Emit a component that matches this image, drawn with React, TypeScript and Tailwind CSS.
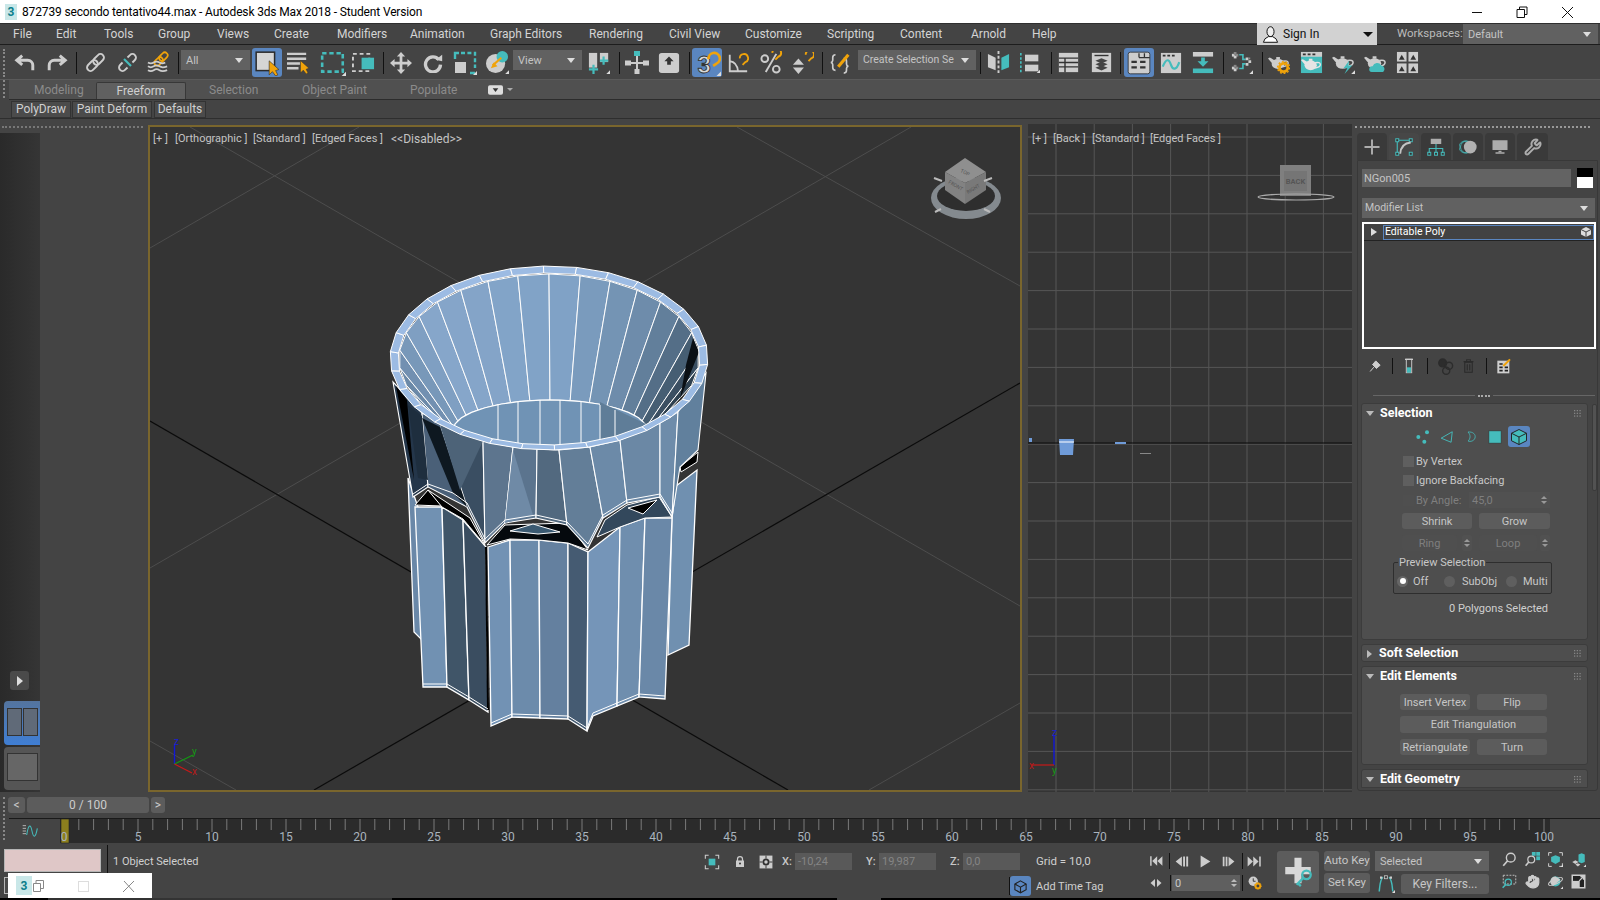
import type { ReactNode } from 'react';
import { Wrench, Hand } from 'lucide-react';

const G = '#cdcdcd';
const T = '#45bcbc';
const O = '#f0a30a';

const ic = (c: ReactNode) => ({ className = '' }: { className?: string }) => (
  <svg viewBox="0 0 24 24" className={`shrink-0 ${className}`}>{c}</svg>
);
const Tri = () => <polygon points="20,24 24,24 24,20" fill="#ddd" />;
const Hook = ({ x = 0, y = 0 }: { x?: number; y?: number }) => (
  <path transform={`translate(${x} ${y})`} d="M14 7 a4.5 4.5 0 1 1 6 4 l-3 3" fill="none" stroke={O} strokeWidth="2" />
);
const Cursor = () => <polygon points="14,10 14,23 17,20 20,24 22,23 20,19 23,18" fill={O} stroke="#333" strokeWidth=".6" />;
const Pot = ({ fill = G }: { fill?: string }) => (
  <g fill={fill}>
    <ellipse cx="11" cy="13" rx="7" ry="5.5" />
    <polygon points="5,13 0,7 2,6 7,9" />
    <path d="M16 10 q6 -1 6 2 q0 3 -6 4" fill="none" stroke={fill} strokeWidth="1.6" />
    <rect x="9" y="5.5" width="4" height="2.5" />
  </g>
);

const Undo = ic(<path d="M9 4 L3 9 L9 14 M3 9 H15 a5.5 5.5 0 0 1 5.5 5.5 V20" fill="none" stroke={G} strokeWidth="3.2" />);
const Redo = ic(<path d="M15 4 L21 9 L15 14 M21 9 H9 a5.5 5.5 0 0 0 -5.5 5.5 V20" fill="none" stroke={G} strokeWidth="3.2" />);
const Link = ic(
  <g transform="rotate(-45 12 12)" fill="none" stroke={G} strokeWidth="2.2">
    <rect x="0" y="8" width="14" height="8" rx="4" />
    <rect x="10" y="8" width="14" height="8" rx="4" />
  </g>
);
const Unlink = ic(
  <g>
    <g transform="rotate(-45 12 12)" fill="none" stroke={G} strokeWidth="2.2">
      <path d="M8 8 H4 a4 4 0 0 0 0 8 H8 M16 8 H20 a4 4 0 0 1 0 8 H16" />
    </g>
    <path d="M8 8 L16 16" stroke={T} strokeWidth="2.5" />
  </g>
);
const Bind = ic(
  <g fill="none">
    <g transform="rotate(-45 15 8)" stroke={O} strokeWidth="1.8">
      <rect x="6" y="5" width="10" height="6" rx="3" />
      <rect x="13" y="5" width="10" height="6" rx="3" />
    </g>
    <path d="M1 12 q3 2 6 0 t6 0 t6 0 M1 16 q3 2 6 0 t6 0 t8 0 M1 20 q3 2 6 0 t6 0 t8 0" stroke={G} strokeWidth="1.8" />
  </g>
);
const SelectIco = ic(
  <g>
    <rect x="2" y="2" width="17" height="17" fill="#d5d5d5" stroke="#2b2b2b" strokeWidth="1.4" />
    <Cursor />
  </g>
);
const SelectName = ic(
  <g>
    <path d="M0 3 H20 M0 8 H20 M0 13 H14 M0 18 H12" stroke={G} strokeWidth="2.6" />
    <Cursor />
  </g>
);
const Region = ic(
  <g>
    <rect x="2" y="3" width="19" height="17" fill="none" stroke={T} strokeWidth="2.4" strokeDasharray="4 2.6" />
    <Tri />
  </g>
);
const WindowIco = ic(
  <g>
    <rect x="1" y="3" width="17" height="18" fill="none" stroke={G} strokeWidth="2" strokeDasharray="4 3" />
    <rect x="10" y="7" width="13" height="12" fill={T} />
  </g>
);
const Move = ic(
  <path fill={G} d="M12 0 L16.5 5 H13.5 V10.5 H19 V7.5 L24 12 L19 16.5 V13.5 H13.5 V19 H16.5 L12 24 L7.5 19 H10.5 V13.5 H5 V16.5 L0 12 L5 7.5 V10.5 H10.5 V5 H7.5 Z" />
);
const Rotate = ic(
  <g>
    <path d="M19 8 A9 9 0 1 0 21 14" fill="none" stroke={G} strokeWidth="4" />
    <polygon points="15,8 23,10 23,2" fill={G} />
  </g>
);
const Scale = ic(
  <g>
    <path d="M8 2 H22 V17" fill="none" stroke={T} strokeWidth="2.4" strokeDasharray="4 2.4" />
    <path d="M2 8 V2 H6 M22 22 H17" fill="none" stroke={T} strokeWidth="2.4" />
    <rect x="2" y="11" width="11" height="11" fill={G} />
    <Tri />
  </g>
);
const Place = ic(
  <g>
    <circle cx="10" cy="13" r="10" fill={G} />
    <circle cx="17" cy="6" r="6" fill={T} />
    <path d="M7 15 L16 7" stroke={O} strokeWidth="2.2" />
    <polygon points="5,18 12,16 8,12" fill={O} />
    <Tri />
  </g>
);
const Pivot = ic(
  <g>
    <rect x="1" y="1" width="9" height="16" fill={G} />
    <rect x="13" y="1" width="9" height="10" fill={G} />
    <path d="M6 14 V24 M1 19 H11 M17 5 V14 M13 9.5 H22" stroke={T} strokeWidth="2.4" />
    <Tri />
  </g>
);
const Manip = ic(
  <g>
    <path d="M12 5 V22 M2 12 H22" stroke={G} strokeWidth="2" />
    <rect x="9" y="0" width="6" height="5" fill={T} />
    <rect x="0" y="9.5" width="6" height="5" fill={G} />
    <rect x="18" y="9.5" width="6" height="5" fill={G} />
    <rect x="9.5" y="18" width="5" height="5" fill={G} />
  </g>
);
const KeyIco = ic(
  <g>
    <rect x="1" y="1" width="22" height="22" rx="3" fill={G} />
    <polygon points="12,5 17,10 14,10 14,14 10,14 10,10 7,10" fill="#333" />
  </g>
);
const Snap3 = ic(
  <g>
    <text x="3" y="21" fontSize="21" fontWeight="700" fill="#d8d8d8" stroke="#333" strokeWidth=".8">3</text>
    <path d="M13 9 a5 5 0 1 1 7 4 l-3 2" fill="none" stroke={O} strokeWidth="2.4" />
    <Tri />
  </g>
);
const Angle = ic(
  <g>
    <path d="M3 3 V21 H22 M3 10 Q11 11 12 21" fill="none" stroke={G} strokeWidth="2" />
    <Hook />
  </g>
);
const Percent = ic(
  <g>
    <circle cx="5" cy="8" r="3.5" fill="none" stroke={G} strokeWidth="2" />
    <circle cx="17" cy="19" r="3.5" fill="none" stroke={G} strokeWidth="2" />
    <path d="M17 3 L6 22" stroke={G} strokeWidth="2" />
    <Hook x={-1} y={-5} />
  </g>
);
const SpinSnap = ic(
  <g>
    <polygon points="7,7 13,14 1,14" fill={G} />
    <polygon points="7,24 13,17 1,17" fill={G} />
    <Hook x={1} y={-4} />
  </g>
);
const Named = ic(
  <g>
    <path d="M6 3 Q3 3 3 6 V9 Q3 11 1 11.5 Q3 12 3 14 V17 Q3 20 6 20" fill="none" stroke={G} strokeWidth="1.8" />
    <path d="M15 7 Q18 7 18 10 V13 Q18 15 20 15.5 Q18 16 18 18 V20 Q18 23 15 23" fill="none" stroke={G} strokeWidth="1.8" />
    <path d="M9 16 L20 3" stroke={O} strokeWidth="3.4" />
  </g>
);
const Mirror = ic(
  <g>
    <polygon points="1,3 9,7 9,20 1,17" fill={G} />
    <polygon points="23,3 15,7 15,20 23,17" fill={T} />
    <path d="M12 0 V24" stroke={G} strokeWidth="2" strokeDasharray="3 2" />
  </g>
);
const Align = ic(
  <g>
    <path d="M1 0 V24" stroke={T} strokeWidth="2" strokeDasharray="3 2" />
    <rect x="6" y="2" width="16" height="8" fill={G} />
    <rect x="6" y="14" width="16" height="8" fill={G} />
    <Tri />
  </g>
);
const TableIco = ic(
  <g>
    <rect x="1" y="1" width="22" height="22" fill={G} />
    <path d="M1 7 H23 M1 12 H23 M1 17 H23 M8 7 V23" stroke="#333" strokeWidth="1.6" />
  </g>
);
const Layers = ic(
  <g>
    <rect x="1" y="1" width="22" height="22" fill={G} />
    <path d="M4 4 H20" stroke="#333" strokeWidth="1.6" />
    <polygon points="12,7 19,10 12,13 5,10" fill="#444" />
    <polygon points="12,11 19,14 12,17 5,14" fill="#444" />
    <polygon points="12,15 19,18 12,21 5,18" fill="#444" />
  </g>
);
const Ribbon = ic(
  <g>
    <rect x="2" y="2" width="20" height="20" rx="2" fill={G} stroke="#333" strokeWidth=".8" />
    <path d="M12 3 V7 M17 3 V7 M12 7 H22" stroke="#333" strokeWidth="1.2" />
    <path d="M5 11 H10 M13 11 H18 M5 16 H10 M13 16 H18" stroke="#333" strokeWidth="2" />
  </g>
);
const Curve = ic(
  <g>
    <rect x="1" y="1" width="22" height="22" fill={G} />
    <path d="M3 4 H6 M8 4 H11 M13 4 H16" stroke="#333" strokeWidth="2" />
    <path d="M3 16 C7 6 10 8 12 14 S18 20 21 11" fill="none" stroke={T} strokeWidth="2.4" />
  </g>
);
const Dope = ic(
  <g>
    <rect x="1" y="0" width="22" height="5" fill={G} />
    <rect x="1" y="18" width="22" height="5" fill={T} />
    <polygon points="12,16 6,10 10,10 10,6 14,6 14,10 18,10" fill={T} />
  </g>
);
const Schematic = ic(
  <g>
    <rect x="1" y="2" width="3" height="3" fill={G} /><rect x="5" y="2" width="3" height="3" fill="#888" />
    <rect x="3" y="0" width="3" height="3" fill="#888" /><rect x="3" y="4" width="3" height="3" fill={G} />
    <rect x="1" y="16" width="3" height="3" fill={G} /><rect x="5" y="16" width="3" height="3" fill="#888" />
    <rect x="3" y="14" width="3" height="3" fill="#888" /><rect x="3" y="18" width="3" height="3" fill={G} />
    <path d="M9 3 H13 V8 H16 M9 18 H13 V13 H16" fill="none" stroke={T} strokeWidth="1.8" />
    <g fill={G}><rect x="16" y="6" width="3" height="3" /><rect x="19" y="9" width="3" height="3" /><rect x="16" y="12" width="3" height="3" /><rect x="19" y="6" width="2" height="2" fill="#888" /></g>
    <Tri />
  </g>
);
const PotGear = ic(
  <g>
    <Pot />
    <circle cx="17" cy="17" r="4.5" fill="none" stroke={O} strokeWidth="3" />
    <circle cx="17" cy="17" r="6.5" fill="none" stroke={O} strokeWidth="1.6" strokeDasharray="2 2" />
  </g>
);
const PotFrame = ic(
  <g>
    <rect x="1" y="1" width="22" height="22" fill={T} />
    <rect x="1" y="1" width="22" height="5" fill={G} />
    <path d="M3 3.5 H6 M8 3.5 H11 M13 3.5 H16" stroke="#333" strokeWidth="2" />
    <g transform="translate(1 3) scale(.92)"><Pot fill="#e5e5e5" /></g>
  </g>
);
const PotBolt = ic(
  <g>
    <Pot />
    <polygon points="18,10 12,18 16,18 13,24 21,15 17,15" fill={T} />
    <Tri />
  </g>
);
const PotCloud = ic(
  <g>
    <Pot />
    <path d="M8 22 a3 3 0 0 1 1 -6 a5 5 0 0 1 9 -1 a4 4 0 0 1 2 7 Z" fill={T} />
  </g>
);
const GridIco = ic(
  <g fill={G}>
    <rect x="1" y="1" width="10" height="10" /><rect x="13" y="1" width="10" height="10" />
    <rect x="1" y="13" width="10" height="10" /><rect x="13" y="13" width="10" height="10" />
    <g fill="#333">
      <polygon points="3,9 6,4 9,9" /><polygon points="15,9 18,4 21,9" />
      <polygon points="3,21 6,16 9,21" /><polygon points="15,21 18,16 21,21" />
    </g>
  </g>
);

const ToolSep = ({ className }: { className: string }) => <div className={`w-px h-[22px] bg-[#111] shrink-0 ${className}`} />;
const Drop = ({ className, label }: { className: string; label: string }) => (
  <div className={`h-[20px] bg-[#616161] text-[#c4c4c4] flex items-center justify-between pl-[5px] pr-[7px] shrink-0 ${className}`}>
    <span className="whitespace-nowrap">{label}</span>
    <span className="w-0 h-0 border-x-[4px] border-x-transparent border-t-[5px] border-t-[#ddd]" />
  </div>
);
const Btn = ({ className, children, dim }: { className: string; children: ReactNode; dim?: boolean }) => (
  <div className={`flex items-center justify-center rounded-[3px] shrink-0 whitespace-nowrap ${dim ? 'bg-[#4f4f4f] text-[#7f7f7f]' : 'bg-[#5c5c5c] text-[#c6c6c6]'} ${className}`}>{children}</div>
);
const Check = ({ dim }: { dim?: boolean }) => <div className={`w-[11px] h-[11px] shrink-0 ${dim ? 'bg-[#4f4f4f]' : 'bg-[#5f5f5f]'}`} />;
const Spin = ({ className }: { className: string }) => (
  <div className={`flex flex-col items-center justify-center gap-[2px] h-[16px] w-[10px] bg-[#515151] rounded-[2px] shrink-0 ${className}`}>
    <span className="w-0 h-0 border-x-[3px] border-x-transparent border-b-[3px] border-b-[#999]" />
    <span className="w-0 h-0 border-x-[3px] border-x-transparent border-t-[3px] border-t-[#999]" />
  </div>
);
const Grip = () => (
  <svg viewBox="0 0 9 9" className="w-[7px] h-[7px] ml-auto mr-[6px]" fill="#888">
    {[0, 3.5, 7].map(x => [0, 3.5, 7].map(y => <rect key={`${x}${y}`} x={x} y={y} width="1.6" height="1.6" />))}
  </svg>
);
const RollHead = ({ title, open = true }: { title: string; open?: boolean }) => (
  <div className="flex items-center h-[18px] shrink-0">
    {open
      ? <span className="ml-[4px] w-0 h-0 border-x-[4px] border-x-transparent border-t-[5px] border-t-[#bbb]" />
      : <span className="ml-[5px] w-0 h-0 border-y-[4px] border-y-transparent border-l-[5px] border-l-[#bbb]" />}
    <span className={`font-bold text-white text-[12.5px] ${open ? 'ml-[6px]' : 'ml-[7px]'}`}>{title}</span>
    <Grip />
  </div>
);

// glass model, coordinates are page pixels
const ell = (cx: number, cy: number, rx: number, ry: number, deg: number): [number, number] => [
  cx + rx * Math.cos((deg * Math.PI) / 180),
  cy + ry * Math.sin((deg * Math.PI) / 180),
];
const pts = (a: [number, number][]) => a.map(p => p.join(',')).join(' ');
const mix = (deg: number) => {
  const stops: [number, number[]][] = [
    [150, [100, 130, 160]], [210, [134, 166, 202]], [270, [128, 162, 198]],
    [310, [108, 138, 168]], [340, [72, 96, 118]], [380, [34, 48, 60]],
  ];
  for (let i = 0; i < stops.length - 1; i++) {
    if (deg <= stops[i + 1][0]) {
      const t = (deg - stops[i][0]) / (stops[i + 1][0] - stops[i][0]);
      const c = stops[i][1].map((v, k) => Math.round(v + (stops[i + 1][1][k] - v) * t));
      return `rgb(${c.join(',')})`;
    }
  }
  return '#222';
};
const wallAngles = Array.from({ length: 19 }, (_, i) => 150 + i * 12);
const rimAngles = Array.from({ length: 30 }, (_, i) => i * 12 + 4);

type Face = { p: string; f: string };
const lowerFaces: Face[] = [
  { p: '408,478 418,507 422,640 414,632', f: '#6a88a8' },
  { p: '672,518 676,486 697,470 689,645 668,655', f: '#7090b0' },
  { p: '415,507 442,507 447,687 423,687', f: '#7191b2' },
  { p: '442,507 463,520 469,700 447,687', f: '#405568' },
  { p: '463,520 486,547 488,712 469,700', f: '#3a4d60' },
  { p: '488,547 510,540 512,717 491,726', f: '#7292b4' },
  { p: '510,540 539,540 540,718 512,717', f: '#6c8bab' },
  { p: '539,540 568,543 568,719 540,718', f: '#64809f' },
  { p: '568,543 588,552 587,731 568,719', f: '#455b72' },
  { p: '588,552 620,527 617,706 593,716 587,731', f: '#7595b8' },
  { p: '620,527 645,518 639,697 617,706', f: '#6f8eae' },
  { p: '645,518 672,518 665,699 639,697', f: '#6a88a8' },
];
const undersides: Face[] = [
  { p: '415,505 428,490 442,506', f: '#000' },
  { p: '428,490 470,518 485,545 463,519 442,507', f: '#000' },
  { p: '487,545 505,525 568,523 588,550 568,543 539,540 510,539', f: '#05090d' },
  { p: '510,531 533,524 560,532 538,534', f: '#3b5a72' },
  { p: '597,537 605,520 627,505 659,497 672,517 645,518 620,527', f: '#33485c' },
  { p: '628,508 657,500 643,514', f: '#000' },
  { p: '680,467 698,452 697,462 681,472', f: '#000' },
];
const upperFaces: Face[] = [
  { p: '393,382 422,413 428,487 413,497', f: '#24364a' },
  { p: '422,413 440,423 467,507 428,487', f: '#4a6078' },
  { p: '440,423 483,441 485,543 467,507', f: '#3a4e62' },
  { p: '483,441 513,447 505,523 485,543', f: '#5d758e' },
  { p: '513,447 537,449 536,518 505,523', f: '#5b748e' },
  { p: '537,449 559,450 567,525 536,518', f: '#52697f' },
  { p: '559,450 590,447 603,518 588,548 567,525', f: '#637e98' },
  { p: '590,447 620,440 627,503 603,518', f: '#6c8aa8' },
  { p: '620,440 660,423 660,497 627,503', f: '#6b88a5' },
  { p: '660,423 678,412 672,517 660,497', f: '#6e8caa' },
  { p: '678,412 706,373 698,450 680,467 672,517', f: '#61809d' },
];
const slivers: Face[] = [
  { p: '396,386 407,400 414,480', f: '#000' },
  { p: '422,418 440,427 467,507 453,493', f: '#0e1820' },
  { p: '408,405 422,416 428,480 418,478', f: '#1e2e3e' },
  { p: '513,450 533,515 505,523', f: '#6f8aa6' },
  { p: '440,425 483,441 460,490', f: '#4d6378' },
];

const Glass = () => (
  <g>
    {wallAngles.map(a => (
      <polygon
        key={a}
        points={pts([ell(549, 359, 150, 85, a), ell(549, 359, 150, 85, a + 12), ell(550, 430, 97, 30, a + 12), ell(550, 430, 97, 30, a)])}
        fill={mix(a)}
        stroke="#fff"
        strokeWidth="1"
      />
    ))}
    <polygon points="693,338 699,352 680,399 686,365" fill="#0a0f14" />
    <polygon points={pts(Array.from({ length: 30 }, (_, i) => ell(550, 430, 97, 30, i * 12)))} fill="#7093b5" stroke="#fff" strokeWidth="1.2" />
    <polygon points="600,402 646,424 640,455 600,455" fill="#5f7d98" />
    <path d="M498 404 V450 M518 401 V450 M540 400 V450 M560 400 V450 M581 402 V450 M600 405 V450 M615 410 V450" stroke="#fff" strokeWidth="1" />
    {lowerFaces.map(f => <polygon key={f.p} points={f.p} fill={f.f} stroke="#fff" strokeWidth="1.3" />)}
    <path d="M486 547 L488 710" stroke="#000" strokeWidth="2" />
    <polyline points="423,684 447,684 469,697 488,709" fill="none" stroke="#fff" strokeWidth="1" />
    <polyline points="491,723 512,714 540,715 568,716 587,728 593,713 617,703 639,694 665,696" fill="none" stroke="#fff" strokeWidth="1" />
    {undersides.map(f => <polygon key={f.p} points={f.p} fill={f.f} stroke="#fff" strokeWidth="1" />)}
    {upperFaces.map(f => <polygon key={f.p} points={f.p} fill={f.f} stroke="#fff" strokeWidth="1.1" />)}
    {slivers.map(f => <polygon key={f.p} points={f.p} fill={f.f} />)}
    <polyline points="413,494 428,484 453,493 467,503 485,539 505,520 536,515 567,522 588,544 603,515 627,500 660,494 672,513" fill="none" stroke="#fff" strokeWidth="1" />
    {rimAngles.map(a => (
      <polygon
        key={a}
        points={pts([ell(549, 358, 159, 92, a), ell(549, 358, 159, 92, a + 12), ell(549, 359, 151, 86, a + 12), ell(549, 359, 151, 86, a)])}
        fill="#9cbbe3"
        stroke="#fff"
        strokeWidth="1"
      />
    ))}
  </g>
);

const OrthoScene = () => (
  <svg viewBox="150 127 870 663" className="w-[870px] h-[663px]">
    <g stroke="#4d4d4d" strokeWidth="1">
      <line x1="190" y1="127" x2="1020" y2="606" />
      <line x1="737" y1="127" x2="1020" y2="286" />
      <line x1="150" y1="741" x2="236" y2="790" />
      <line x1="359" y1="127" x2="150" y2="248" />
      <line x1="911" y1="127" x2="150" y2="568" />
      <line x1="1020" y1="703" x2="869" y2="790" />
    </g>
    <line x1="150" y1="421" x2="788" y2="790" stroke="#0b0b0b" strokeWidth="1.2" />
    <line x1="1020" y1="383" x2="314" y2="790" stroke="#0b0b0b" strokeWidth="1.2" />
    <Glass />
    <line x1="174.5" y1="764" x2="174.5" y2="745" stroke="#1218d8" strokeWidth="1.4" />
    <line x1="174.5" y1="764" x2="193" y2="755" stroke="#129a12" strokeWidth="1.2" />
    <line x1="174.5" y1="764" x2="192" y2="773" stroke="#c81818" strokeWidth="1.2" />
    <text x="174" y="745" fontSize="10" fill="#1a20d0">z</text>
    <text x="192" y="755" fontSize="10" fill="#159a15">y</text>
    <text x="192" y="775" fontSize="10" fill="#b81a1a">x</text>
    {/* view cube */}
    <ellipse cx="966" cy="198" rx="35" ry="21" fill="#848a8f" />
    <ellipse cx="966" cy="196" rx="29" ry="15" fill="#2e2e2e" />
    <polygon points="965,158 986,172 965,183 945,172" fill="#8f8f8f" />
    <polygon points="945,172 965,183 965,204 945,190" fill="#828282" />
    <polygon points="986,172 986,190 965,204 965,183" fill="#797979" />
    <text x="960" y="172" fontSize="5" fill="#555" transform="rotate(25 960 172)">TOP</text>
    <text x="948" y="183" fontSize="5" fill="#555" transform="rotate(30 948 183)">FRONT</text>
    <text x="968" y="194" fontSize="5" fill="#555" transform="rotate(-30 968 194)">RIGHT</text>
    <path d="M934 178 l8 3 M992 178 l-8 3 M935 212 l6 -3 M990 212 l-6 -3" stroke="#bbb" strokeWidth="2" />
  </svg>
);

const gridX = Array.from({ length: 8 }, (_, i) => 1056 + i * 38.2);
const gridY = Array.from({ length: 18 }, (_, i) => 137 + i * 38.4);
const BackScene = () => (
  <svg viewBox="1028 124 324 668" className="w-[324px] h-[668px]">
    {gridX.map(x => <line key={x} x1={x} y1="124" x2={x} y2="792" stroke="#565656" />)}
    {gridY.map(y => <line key={y} x1="1028" y1={y} x2="1352" y2={y} stroke="#565656" />)}
    <line x1="1028" y1="443" x2="1352" y2="443" stroke="#0b0b0b" strokeWidth="1.2" />
    <rect x="1029" y="438" width="3" height="4" fill="#6f9bd8" />
    <polygon points="1059,439 1074,439 1073,455 1060,455" fill="#6f9bd8" />
    <rect x="1059" y="441" width="15" height="2" fill="#fff" opacity=".5" />
    <rect x="1115" y="442" width="11" height="2" fill="#6f9bd8" />
    <rect x="1140" y="453" width="11" height="1" fill="#888" />
    <line x1="1054" y1="765" x2="1054" y2="735" stroke="#1218d8" strokeWidth="1.4" />
    <line x1="1054" y1="765" x2="1031" y2="765" stroke="#c81818" strokeWidth="1.2" />
    <text x="1052" y="736" fontSize="10" fill="#1a20d0">z</text>
    <text x="1052" y="774" fontSize="10" fill="#159a15">y</text>
    <text x="1029" y="769" fontSize="10" fill="#b81a1a">x</text>
    <rect x="1280" y="165" width="31" height="31" fill="#7f7f7f" />
    <rect x="1284" y="171" width="23" height="20" fill="#757575" />
    <text x="1295.5" y="184" textAnchor="middle" fontSize="7.5" fontWeight="700" fill="#555">BACK</text>
    <ellipse cx="1296" cy="197" rx="38" ry="3" fill="none" stroke="#aaa" strokeWidth="1.2" />
  </svg>
);

const frames = Array.from({ length: 101 }, (_, i) => i);
const Timeline = () => (
  <svg viewBox="60 819 1490 24" className="w-[1490px] h-[24px] overflow-visible">
    {frames.map(i => <line key={i} x1={64 + i * 14.8} y1="819" x2={64 + i * 14.8} y2={i % 5 === 0 ? 832 : 830} stroke="#7a7a7a" />)}
    <rect x="61" y="819" width="8" height="24" fill="#8c7f1e" stroke="#222" strokeWidth=".6" />
    {frames.filter(i => i % 5 === 0).map(i => (
      <text key={i} x={64 + i * 14.8} y="841" textAnchor="middle" fontSize="12" fill="#a9b4be">{i}</text>
    ))}
  </svg>
);

const Isolate = ic(<g><path d="M2 7 V2 H7 M17 2 H22 V7 M22 17 V22 H17 M7 22 H2 V17" fill="none" stroke={G} strokeWidth="1.6" /><rect x="7" y="7" width="10" height="10" fill={T} /></g>);
const Lock = ic(<g><path d="M7 11 V7 a5 5 0 0 1 10 0 V11" fill="none" stroke={G} strokeWidth="2.5" /><rect x="4" y="10" width="16" height="13" fill={G} /><circle cx="12" cy="16" r="2" fill="#333" /></g>);
const Abs = ic(<g><rect x="1" y="1" width="22" height="22" fill={G} /><circle cx="12" cy="12" r="6" fill="#333" /><circle cx="12" cy="12" r="3" fill={G} /><path d="M12 1 V6 M12 18 V23 M1 12 H6 M18 12 H23" stroke="#333" strokeWidth="1.6" /></g>);
const CubeOut = ({ stroke = '#222' }: { stroke?: string }) => (
  <g fill="none" stroke={stroke} strokeWidth="1.8">
    <polygon points="12,3 21,8 21,17 12,22 3,17 3,8" />
    <path d="M3 8 L12 13 L21 8 M12 13 V22" />
  </g>
);
const TagIco = ic(<CubeOut />);
const GoStart = ic(<path fill={G} d="M2 4 h2.5 v16 H2 Z M14 4 V20 L5.5 12 Z M23 4 V20 L14.5 12 Z" />);
const GoEnd = ic(<path fill={G} d="M22 4 h-2.5 v16 H22 Z M10 4 V20 L18.5 12 Z M1 4 V20 L9.5 12 Z" />);
const Prev = ic(<path fill={G} d="M11 4 V20 L1 12 Z M13 4 h3 v16 h-3 Z M18 4 h3 v16 h-3 Z" />);
const Next = ic(<path fill={G} d="M13 4 V20 L23 12 Z M3 4 h3 v16 H3 Z M8 4 h3 v16 H8 Z" />);
const Play = ic(<g><polygon points="3,1 21,12 3,23" fill={G} /></g>);
const KeyMode = ic(<path fill={G} d="M10 4 V20 L1 12 Z M14 4 V20 L23 12 Z" />);
const TimeCfg = ic(<g><circle cx="9" cy="9" r="8" fill={G} /><path d="M9 4 V9 H13" stroke="#333" strokeWidth="1.6" fill="none" /><circle cx="17" cy="17" r="4" fill="none" stroke={O} strokeWidth="3" /><circle cx="17" cy="17" r="6" fill="none" stroke={O} strokeWidth="1.4" strokeDasharray="2 2" /></g>);
const BigKey = ic(<g><path d="M12 2 V20 M3 11 H21" stroke="#d8d8d8" strokeWidth="5" /><circle cx="18" cy="14" r="3" fill="none" stroke={T} strokeWidth="1.6" /><path d="M16 16 L11 21 M12 20 L14 22" stroke={T} strokeWidth="1.6" /></g>);
const Tangent = ic(<g><rect x="10" y="1" width="4" height="4" fill="none" stroke={G} strokeWidth="1" /><path d="M3 22 C4 12 4 6 8 3 M21 22 C20 12 20 6 16 3" fill="none" stroke={T} strokeWidth="2" /><rect x="4" y="2" width="3" height="3" fill={G} /><rect x="17" y="2" width="3" height="3" fill={G} /><Tri /></g>);
const Mag = ic(<g><circle cx="14" cy="9" r="7" fill="none" stroke={G} strokeWidth="2.2" /><path d="M9 14 L2 22" stroke={G} strokeWidth="2.8" /></g>);
const ZoomAll = ic(<g><rect x="11" y="0" width="6" height="6" fill={T} /><rect x="18" y="0" width="6" height="6" fill={T} /><rect x="18" y="7" width="6" height="6" fill={T} /><circle cx="10" cy="12" r="5.5" fill="none" stroke={G} strokeWidth="2" /><path d="M6 16 L1 22" stroke={G} strokeWidth="2.6" /></g>);
const ZoomExt = ic(<g><path d="M1 6 V1 H6 M18 1 H23 V6 M23 18 V23 H18 M6 23 H1 V18" fill="none" stroke={G} strokeWidth="1.6" /><polygon points="12,5 19,8 19,15 12,19 5,15 5,8" fill={T} /><Tri /></g>);
const ZoomExtAll = ic(<g><polygon points="17,2 22,4 22,16 17,18 12,16 12,4" fill={T} /><polygon points="7,13 12,16 7,19 2,16" fill={G} /><polygon points="11,18 15,20 11,23 7,20" fill={G} /><Tri /></g>);
const ZoomRegion = ic(<g><rect x="2" y="2" width="20" height="14" fill="none" stroke={G} strokeWidth="1.4" strokeDasharray="3 2" /><circle cx="10" cy="13" r="5" fill="none" stroke={T} strokeWidth="2" /><path d="M6 17 L1 22" stroke={T} strokeWidth="2.4" /></g>);
const Orbit = ic(<g><circle cx="12" cy="12" r="8" fill={T} /><path d="M12 4 a8 8 0 0 0 -4 15 L20 9" fill={G} /><ellipse cx="12" cy="12" rx="12" ry="4" fill="none" stroke={G} strokeWidth="1.6" transform="rotate(-25 12 12)" /><Tri /></g>);
const MaxToggle = ic(<g><rect x="2" y="2" width="20" height="20" fill="#222" stroke={G} strokeWidth="2.4" /><polygon points="3,21 14,21 14,11 3,11" fill={G} /><path d="M13 11 L20 4 M15 4 H20 V9" stroke={G} strokeWidth="2" fill="none" /></g>);

const Plus = ic(<path d="M12 2 V22 M2 12 H22" stroke="#adadad" strokeWidth="2.6" />);
const ModifyTab = ic(
  <g>
    <path d="M3 3 H21 M3 3 V21" stroke={T} strokeWidth="1.5" />
    <rect x="1" y="1" width="4" height="4" fill="#333" stroke={T} strokeWidth="1.3" />
    <rect x="19" y="1" width="4" height="4" fill="#333" stroke={T} strokeWidth="1.3" />
    <rect x="1" y="19" width="4" height="4" fill="#333" stroke={T} strokeWidth="1.3" />
    <rect x="19" y="19" width="4" height="4" fill="#333" stroke={T} strokeWidth="1.3" />
    <path d="M7 21 Q8 7 21 6" fill="none" stroke="#c4c4c4" strokeWidth="2.4" />
  </g>
);
const HierTab = ic(
  <g>
    <rect x="5" y="1" width="14" height="7" fill="#adadad" />
    <path d="M12 8 V14 M3 20 V14 H21 V20 M12 14 V20" fill="none" stroke={T} strokeWidth="1.4" />
    <rect x="1" y="19" width="4" height="4" fill="none" stroke={T} strokeWidth="1.3" />
    <rect x="10" y="19" width="4" height="4" fill="none" stroke={T} strokeWidth="1.3" />
    <rect x="19" y="19" width="4" height="4" fill="none" stroke={T} strokeWidth="1.3" />
  </g>
);
const MotionTab = ic(
  <g>
    <circle cx="8" cy="12" r="8" fill="none" stroke={T} strokeWidth="1" />
    <circle cx="10" cy="12" r="8" fill="none" stroke={T} strokeWidth="1.2" />
    <circle cx="15" cy="12" r="8.5" fill="#b2b2b2" />
  </g>
);
const DisplayTab = ic(<g><rect x="2" y="3" width="20" height="13" fill="#adadad" /><rect x="10" y="17" width="4" height="2" fill="#adadad" /><rect x="6" y="19" width="12" height="2" fill="#adadad" /></g>);
const Pin = ic(<path d="M5 20 L11 13 M9 9 L15 15 M14 3 L21 10 L15 15 L9 9 Z" fill="#cfcfcf" stroke="#cfcfcf" strokeWidth="1.6" />);
const Tube = ic(<g><rect x="8" y="2" width="8" height="20" fill="none" stroke="#bbb" strokeWidth="1.6" /><rect x="9" y="14" width="6" height="8" fill={T} /><rect x="6" y="1" width="12" height="2" fill="#ccc" /></g>);
const Instance = ic(<g fill="none" stroke="#2c2c2c" strokeWidth="2"><circle cx="8" cy="7" r="5.5" fill="#2c2c2c" /><circle cx="17" cy="11" r="5" /><circle cx="13" cy="18" r="5" /></g>);
const Trash = ic(<g fill="none" stroke="#2c2c2c" strokeWidth="1.8"><path d="M4 5 H20 M9 5 V2 H15 V5" /><rect x="6" y="6" width="12" height="16" /><path d="M10 9 V19 M14 9 V19" /></g>);
const ConfigIco = ic(<g><rect x="2" y="4" width="18" height="19" fill="#cfcfcf" /><path d="M5 9 H10 M5 14 H10 M5 19 H10 M13 14 H18 M13 19 H18" stroke="#222" strokeWidth="2.4" /><path d="M11 12 L21 2" stroke={O} strokeWidth="3" /></g>);
const Verts = ic(<g fill={T}><circle cx="5" cy="12" r="3" /><circle cx="18" cy="5" r="3" /><circle cx="14" cy="19" r="3" /></g>);
const Edge = ic(<polygon points="2,14 21,3 19,21" fill="none" stroke={T} strokeWidth="1.6" />);
const Border = ic(<path d="M6 3 C16 2 22 8 20 15 C18 21 11 23 6 21 C11 17 12 9 6 3 Z" fill="none" stroke={T} strokeWidth="1.6" />);
const Poly = ic(<rect x="1.5" y="1.5" width="21" height="21" fill={T} stroke="#333" strokeWidth="1" />);
const Element = ic(<g fill="none" stroke="#222" strokeWidth="1.3"><polygon points="12,2 22,7 22,17 12,22 2,17 2,7" fill={T} /><path d="M2 7 L12 12 L22 7 M12 12 V22" /></g>);

const tabIcons = [Plus, ModifyTab, HierTab, MotionTab, DisplayTab];

export default function App() {
  return (
    <div className="relative w-[1600px] h-[900px] overflow-hidden flex flex-col bg-[#444444] font-['Roboto',sans-serif] text-[12px] leading-none text-[#c8c8c8]">
      {/* title bar */}
      <div className="h-[23px] bg-white flex items-center text-black shrink-0">
        <div className="ml-[5px] w-[12px] h-[16px] bg-[#c9e7e8] text-[#0d7f8c] font-bold flex items-center justify-center">3</div>
        <span className="ml-[5px] whitespace-nowrap tracking-[-0.15px]">872739 secondo tentativo44.max - Autodesk 3ds Max 2018 - Student Version</span>
        <svg viewBox="0 0 110 14" className="ml-auto mr-[18px] w-[110px] h-[14px]" fill="none" stroke="#111" strokeWidth="1">
          <path d="M0 7.5 H10" />
          <path d="M45 4.5 H52.5 V12.5 H45 Z M47.5 4.5 V2 H55 V9.5 H52.5" />
          <path d="M90 2 L101 13 M101 2 L90 13" />
        </svg>
      </div>

      {/* menu bar */}
      <div className="h-[22px] bg-[#444] border-t border-[#2f2f2f] border-b border-b-[#1d1d1d] flex items-center shrink-0 box-border">
        <div className="w-[1257px] pl-[13px] grid grid-cols-[43px_48px_54px_59px_57px_63px_73px_80px_99px_80px_76px_82px_73px_71px_61px_30px] text-[#d4d4d4] whitespace-nowrap">
          {['File', 'Edit', 'Tools', 'Group', 'Views', 'Create', 'Modifiers', 'Animation', 'Graph Editors', 'Rendering', 'Civil View', 'Customize', 'Scripting', 'Content', 'Arnold', 'Help'].map(m => (
            <span key={m}>{m}</span>
          ))}
        </div>
        <div className="w-[120px] h-[22px] bg-[#d2d2d2] flex items-center text-[#111] shrink-0">
          <svg viewBox="0 0 24 24" className="ml-[5px] w-[17px] h-[17px]">
            <ellipse cx="12" cy="8" rx="5" ry="7" fill="#eee" stroke="#111" strokeWidth="1.4" />
            <path d="M2 23 Q3 17 9 15 L15 15 Q21 17 22 23 Z" fill="#fff" stroke="#111" strokeWidth="1.4" />
          </svg>
          <span className="ml-[4px]">Sign In</span>
          <span className="ml-auto mr-[4px] w-0 h-0 border-x-[5px] border-x-transparent border-t-[5px] border-t-[#111]" />
        </div>
        <span className="ml-[20px] w-[66px] shrink-0 text-[#bbb] text-[11.5px] whitespace-nowrap">Workspaces:</span>
        <Drop className="w-[135px] text-[11px]" label="Default" />
      </div>

      {/* main toolbar */}
      <div className="h-[35px] bg-[#444] border-b border-[#5a5a5a] flex items-center pt-[1px] shrink-0 box-border">
        <div className="ml-[3px] w-[2px] h-[28px] border-l-2 border-dotted border-[#888] shrink-0" />
        <Undo className="ml-[9px] w-[22px] h-[22px]" />
        <Redo className="ml-[10px] w-[22px] h-[22px]" />
        <ToolSep className="ml-[8px]" />
        <Link className="ml-[8px] w-[21px] h-[21px]" />
        <Unlink className="ml-[11px] w-[21px] h-[21px]" />
        <Bind className="ml-[9px] w-[23px] h-[23px]" />
        <ToolSep className="ml-[8px]" />
        <Drop className="ml-[2px] mb-[5px] w-[69px] text-[11px]" label="All" />
        <div className="ml-[2px] w-[30px] h-[29px] bg-[#5a86c0] rounded-[3px] flex items-center justify-center shrink-0"><SelectIco className="w-[26px] h-[26px]" /></div>
        <SelectName className="ml-[5px] w-[23px] h-[23px]" />
        <Region className="ml-[10px] w-[26px] h-[26px]" />
        <WindowIco className="ml-[6px] w-[23px] h-[23px]" />
        <ToolSep className="ml-[8px]" />
        <Move className="ml-[6px] w-[22px] h-[22px]" />
        <Rotate className="ml-[11px] w-[20px] h-[20px]" />
        <Scale className="ml-[10px] w-[24px] h-[24px]" />
        <Place className="ml-[9px] w-[23px] h-[23px]" />
        <Drop className="ml-[4px] mb-[5px] w-[69px] text-[11px]" label="View" />
        <Pivot className="ml-[6px] w-[22px] h-[22px]" />
        <ToolSep className="ml-[9px]" />
        <Manip className="ml-[5px] w-[24px] h-[24px]" />
        <KeyIco className="ml-[9px] w-[22px] h-[22px]" />
        <ToolSep className="ml-[9px]" />
        <div className="ml-[2px] w-[30px] h-[29px] bg-[#5a86c0] rounded-[3px] flex items-center justify-center shrink-0"><Snap3 className="w-[27px] h-[27px]" /></div>
        <Angle className="ml-[5px] w-[22px] h-[22px]" />
        <Percent className="ml-[11px] w-[23px] h-[23px]" />
        <SpinSnap className="ml-[9px] w-[22px] h-[22px]" />
        <ToolSep className="ml-[8px]" />
        <Named className="ml-[7px] w-[22px] h-[22px]" />
        <Drop className="ml-[6px] mb-[5px] w-[118px] text-[10.5px]" label="Create Selection Se" />
        <ToolSep className="ml-[4px]" />
        <Mirror className="ml-[6px] w-[23px] h-[23px]" />
        <Align className="ml-[10px] w-[20px] h-[22px]" />
        <ToolSep className="ml-[11px]" />
        <TableIco className="ml-[6px] w-[21px] h-[21px]" />
        <Layers className="ml-[12px] w-[21px] h-[21px]" />
        <ToolSep className="ml-[8px]" />
        <div className="ml-[3px] w-[30px] h-[29px] bg-[#5a86c0] rounded-[3px] flex items-center justify-center shrink-0"><Ribbon className="w-[26px] h-[26px]" /></div>
        <Curve className="ml-[6px] w-[22px] h-[22px]" />
        <Dope className="ml-[10px] w-[22px] h-[22px]" />
        <ToolSep className="ml-[9px]" />
        <Schematic className="ml-[7px] w-[22px] h-[22px]" />
        <ToolSep className="ml-[9px]" />
        <PotGear className="ml-[5px] w-[22px] h-[22px]" />
        <PotFrame className="ml-[10px] w-[23px] h-[23px]" />
        <PotBolt className="ml-[9px] w-[23px] h-[23px]" />
        <PotCloud className="ml-[9px] w-[23px] h-[23px]" />
        <GridIco className="ml-[9px] w-[23px] h-[23px]" />
      </div>

      {/* ribbon tabs */}
      <div className="h-[20px] flex shrink-0">
        <div className="ml-[3px] w-[2px] h-[38px] border-l-2 border-dotted border-[#888] shrink-0" />
        <div className="ml-[4px] flex-1 bg-[#505050] border-b border-[#2c2c2c] grid grid-cols-[87px_113px_93px_108px_78px_19px_20px] items-center text-[#8b8b8b] whitespace-nowrap box-border">
          <span className="pl-[25px]">Modeling</span>
          <span className="self-end h-[17px] bg-[#606060] border-t border-x border-[#383838] rounded-t-[2px] mr-[23px] text-[#cfcfcf] flex items-center justify-center">Freeform</span>
          <span>Selection</span>
          <span>Object Paint</span>
          <span>Populate</span>
          <svg viewBox="0 0 16 10" className="w-[15px] h-[10px]"><rect x="0" y="0" width="16" height="10" rx="2" fill="#ddd" /><polygon points="5,3 11,3 8,7" fill="#333" /></svg>
          <span className="w-0 h-0 border-x-[3px] border-x-transparent border-t-[3px] border-t-[#aaa]" />
        </div>
      </div>
      <div className="h-[19px] flex items-center pl-[11px] gap-[1px] bg-[#444] border-b border-[#2e2e2e] shrink-0 box-border">
        <div className="h-[17px] w-[60px] border border-[#333] bg-[#4b4b4b] flex items-center justify-center text-[#d0d0d0]">PolyDraw</div>
        <div className="h-[17px] w-[80px] border border-[#333] bg-[#4b4b4b] flex items-center justify-center text-[#d0d0d0]">Paint Deform</div>
        <div className="ml-[1px] h-[17px] w-[52px] border border-[#333] bg-[#4b4b4b] flex items-center justify-center text-[#d0d0d0]">Defaults</div>
      </div>

      {/* main area */}
      <div className="flex h-[673px] shrink-0">
        <div className="w-[148px] flex flex-col shrink-0">
          <div className="h-[14px] shrink-0 pt-[7px]"><div className="ml-[2px] w-[141px] border-t-2 border-dotted border-[#777]" /></div>
          <div className="w-[40px] flex-1 bg-gradient-to-r from-[#2a2a2a] to-[#353535] flex flex-col items-start">
            <div className="flex-1" />
            <div className="ml-[10px] w-[19px] h-[19px] rounded-[3px] bg-[#4a4a4a] flex items-center justify-center"><span className="w-0 h-0 border-y-[5px] border-y-transparent border-l-[6px] border-l-[#ddd]" /></div>
            <div className="mt-[11px] ml-[4px] w-[36px] h-[44px] rounded-l-[4px] bg-gradient-to-b from-[#54749e] to-[#3f7ed4] flex gap-[1px] pl-[3px] pt-[7px]">
              <div className="w-[15px] h-[28px] bg-[#606a78] border border-[#333]" />
              <div className="w-[15px] h-[28px] bg-[#606a78] border border-[#333]" />
            </div>
            <div className="mt-[2px] mb-[2px] ml-[4px] w-[36px] h-[43px] rounded-l-[4px] bg-[#555] pl-[3px] pt-[6px]">
              <div className="w-[31px] h-[28px] bg-[#666] border border-[#333]" />
            </div>
          </div>
        </div>

        <div className="relative mt-[6px] w-[874px] h-[667px] border-2 border-[#7a662d] bg-[#343434] shrink-0 box-border overflow-hidden">
          <OrthoScene />
          <div className="absolute left-[3px] top-[6px] grid grid-cols-[22px_78px_59px_79px_90px] text-[11px] text-[#c4c4c4] whitespace-nowrap">
            <span>[+ ]</span>
            <span>[Orthographic ]</span>
            <span>[Standard ]</span>
            <span>[Edged Faces ]</span>
            <span className="text-[12px]">&lt;&lt;Disabled&gt;&gt;</span>
          </div>
        </div>

        <div className="relative ml-[6px] mt-[5px] w-[324px] h-[668px] bg-[#343434] shrink-0 overflow-hidden">
          <BackScene />
          <div className="absolute left-[4px] top-[9px] grid grid-cols-[21px_39px_58px_80px] text-[11px] text-[#c4c4c4] whitespace-nowrap">
            <span>[+ ]</span>
            <span>[Back ]</span>
            <span>[Standard ]</span>
            <span>[Edged Faces ]</span>
          </div>
        </div>

        {/* command panel */}
        <div className="ml-[3px] w-[245px] flex flex-col shrink-0">
          <div className="h-[14px] shrink-0 pt-[7px]"><div className="w-[235px] border-t-2 border-dotted border-[#999]" /></div>
          <div className="ml-[2px] flex gap-[2px] h-[27px] shrink-0">
            {tabIcons.map((Icon, i) => (
              <div key={i} className={`w-[30px] h-[27px] rounded-t-[4px] flex items-center justify-center ${i === 1 ? 'bg-[#474747]' : 'bg-[#3a3a3a]'}`}>
                <Icon className="w-[18px] h-[18px]" />
              </div>
            ))}
            <div className="w-[31px] h-[27px] rounded-t-[4px] bg-[#3a3a3a] flex items-center justify-center"><Wrench size={18} color="#adadad" strokeWidth={2.6} /></div>
          </div>
          <div className="relative ml-[2px] w-[241px] h-[631px] border border-[#383838] bg-[#444] box-border shrink-0 rounded-b-[3px]">
            <div className="mt-[7px] ml-[4px] flex h-[20px] shrink-0">
              <div className="w-[209px] h-[18px] mt-[1px] bg-[#636363] text-[#c4c4c4] text-[11px] flex items-center pl-[2px]">NGon005</div>
              <div className="ml-[6px] w-[16px] h-[20px] flex flex-col"><div className="h-[9px] bg-black" /><div className="h-[11px] bg-white" /></div>
            </div>
            <Drop className="mt-[10px] ml-[4px] w-[233px] text-[10.5px] !pl-[3px]" label="Modifier List" />
            <div className="mt-[4px] ml-[4px] w-[234px] h-[127px] border-2 border-white bg-[#424242] box-border">
              <div className="h-[17px] border-b border-[#222] flex items-center box-border">
                <span className="ml-[7px] w-0 h-0 border-y-[4px] border-y-transparent border-l-[6px] border-l-[#ddd]" />
                <div className="ml-[6px] w-[211px] h-[15px] border border-[#5a86c0] flex items-center pl-[1px] text-white text-[10.5px] box-border">
                  Editable Poly
                  <svg viewBox="0 0 24 24" className="ml-auto mr-[1px] w-[12px] h-[12px]"><polygon points="12,2 22,7 22,17 12,22 2,17 2,7" fill="#ddd" /><path d="M2 7 L12 12 L22 7 M12 12 V22" stroke="#444" strokeWidth="2" fill="none" /></svg>
                </div>
              </div>
            </div>
            <div className="mt-[5px] flex items-center h-[24px]">
              <Pin className="ml-[9px] w-[15px] h-[15px]" />
              <div className="ml-[10px] w-px h-[16px] bg-[#111]" />
              <Tube className="ml-[8px] w-[16px] h-[16px]" />
              <div className="ml-[10px] w-px h-[16px] bg-[#111]" />
              <Instance className="ml-[9px] w-[17px] h-[17px]" />
              <Trash className="ml-[7px] w-[15px] h-[16px]" />
              <div className="ml-[10px] w-px h-[16px] bg-[#111]" />
              <ConfigIco className="ml-[9px] w-[16px] h-[16px]" />
            </div>
            <div className="mt-[17px] ml-[15px] w-[224px] flex items-center gap-[3px] h-px">
              <div className="w-[102px] border-t border-[#666]" />
              <div className="w-[12px] border-t-2 border-dotted border-[#aaa]" />
              <div className="w-[102px] border-t border-[#666]" />
            </div>

            {/* rollouts */}
            <div className="ml-[3px] mt-[7px] w-[227px] flex flex-col gap-[4px] text-[11px]">
              <div className="h-[237px] bg-[#4e4e4e] rounded-[3px] border border-[#3c3c3c] box-border">
                <RollHead title="Selection" />
                <div className="mt-[4px] ml-[53px] flex items-center h-[21px]">
                  <Verts className="w-[16px] h-[16px]" />
                  <Edge className="ml-[9px] w-[14px] h-[14px]" />
                  <Border className="ml-[11px] w-[12px] h-[15px]" />
                  <Poly className="ml-[11px] w-[14px] h-[14px]" />
                  <div className="ml-[6px] w-[22px] h-[21px] bg-[#5a86c0] rounded-[3px] flex items-center justify-center"><Element className="w-[18px] h-[18px]" /></div>
                </div>
                <div className="mt-[9px] ml-[41px] flex items-center h-[11px]"><Check /><span className="ml-[2px]">By Vertex</span></div>
                <div className="mt-[8px] ml-[41px] flex items-center h-[11px]"><Check /><span className="ml-[2px]">Ignore Backfacing</span></div>
                <div className="mt-[6px] ml-[41px] flex items-center h-[16px] text-[#7f7f7f]">
                  <Check dim />
                  <span className="ml-[2px] w-[53px]">By Angle:</span>
                  <div className="w-[81px] h-[16px] bg-[#515151] flex items-center justify-between pl-[3px] pr-[3px]">
                    45,0
                    <span className="flex flex-col gap-[2px]">
                      <span className="w-0 h-0 border-x-[3px] border-x-transparent border-b-[3px] border-b-[#999]" />
                      <span className="w-0 h-0 border-x-[3px] border-x-transparent border-t-[3px] border-t-[#999]" />
                    </span>
                  </div>
                </div>
                <div className="mt-[5px] ml-[40px] flex h-[16px]">
                  <Btn className="w-[70px] h-[16px]">Shrink</Btn>
                  <Btn className="ml-[7px] w-[71px] h-[16px]">Grow</Btn>
                </div>
                <div className="mt-[6px] ml-[40px] flex h-[16px]">
                  <Btn dim className="w-[55px] h-[16px]">Ring</Btn>
                  <Spin className="ml-[5px]" />
                  <Btn dim className="ml-[7px] w-[58px] h-[16px]">Loop</Btn>
                  <Spin className="ml-[3px]" />
                </div>
                <div className="relative mt-[11px] ml-[31px] w-[159px] h-[32px] border border-[#2e2e2e] rounded-[2px] box-border flex items-center pt-[6px]">
                  <span className="absolute left-[4px] -top-[6px] bg-[#4e4e4e] px-[1px]">Preview Selection</span>
                  <span className="ml-[3px] w-[11px] h-[11px] rounded-full bg-[#666] flex items-center justify-center shrink-0"><span className="w-[6px] h-[6px] rounded-full bg-white" /></span>
                  <span className="ml-[5px] w-[31px]">Off</span>
                  <span className="w-[11px] h-[11px] rounded-full bg-[#5f5f5f] shrink-0" />
                  <span className="ml-[7px] w-[44px]">SubObj</span>
                  <span className="w-[11px] h-[11px] rounded-full bg-[#5f5f5f] shrink-0" />
                  <span className="ml-[6px]">Multi</span>
                </div>
                <div className="mt-[9px] ml-[87px] whitespace-nowrap text-[#d0d0d0]">0 Polygons Selected</div>
              </div>
              <div className="h-[18px] bg-[#4e4e4e] rounded-[3px] border border-[#3c3c3c] box-border flex items-center pt-[1px]"><div className="flex-1"><RollHead title="Soft Selection" open={false} /></div></div>
              <div className="h-[99px] bg-[#4e4e4e] rounded-[3px] border border-[#3c3c3c] box-border">
                <RollHead title="Edit Elements" />
                <div className="mt-[9px] ml-[38px] flex">
                  <Btn className="w-[70px] h-[16px]">Insert Vertex</Btn>
                  <Btn className="ml-[7px] w-[70px] h-[16px]">Flip</Btn>
                </div>
                <Btn className="mt-[6px] ml-[38px] w-[147px] h-[17px]">Edit Triangulation</Btn>
                <div className="mt-[6px] ml-[38px] flex">
                  <Btn className="w-[70px] h-[16px]">Retriangulate</Btn>
                  <Btn className="ml-[7px] w-[70px] h-[16px]">Turn</Btn>
                </div>
              </div>
              <div className="h-[19px] bg-[#4e4e4e] rounded-t-[3px] border border-[#3c3c3c] box-border flex items-center pt-[1px]"><div className="flex-1"><RollHead title="Edit Geometry" /></div></div>
            </div>
            <div className="absolute left-[234px] top-[243px] w-[5px] h-[87px] bg-[#525252] rounded-[2px] border border-[#3a3a3a]" />
          </div>
        </div>
      </div>

      {/* time slider */}
      <div className="h-[26px] flex pt-[5px] shrink-0 box-border">
        <div className="ml-[3px] w-[2px] h-[43px] border-l-2 border-dotted border-[#888] shrink-0" />
        <Btn className="ml-[3px] w-[17px] h-[16px] text-[#ccc]">&lt;</Btn>
        <Btn className="ml-[2px] w-[122px] h-[16px] text-[#ccc]">0 / 100</Btn>
        <Btn className="ml-[2px] w-[14px] h-[16px] text-[#ccc]">&gt;</Btn>
      </div>
      <div className="h-[25px] ml-[9px] border-t border-[#1a1a1a] flex box-border shrink-0">
        <div className="w-[51px] flex items-center pl-[13px]">
          <svg viewBox="0 0 24 24" className="w-[16px] h-[16px]">
            <path d="M1 4 H6 M1 8 H6 M1 12 H6 M1 16 H6" stroke="#bbb" strokeWidth="1.4" />
            <path d="M7 18 C10 0 13 2 15 12 S20 24 23 8" fill="none" stroke={T} strokeWidth="1.6" />
          </svg>
        </div>
        <div className="bg-[#2b2b2b] h-[24px]"><Timeline /></div>
      </div>

      {/* status row */}
      <div className="h-[55px] flex shrink-0 text-[11px]">
        <div className="w-[107px] shrink-0 pt-[6px]">
          <div className="ml-[4px] w-[97px] h-[23px] bg-[#dfc7c7] border border-[#b5b5b5] box-border" />
          <div className="ml-[4px] mt-[5px] w-[97px] h-[17px] border border-[#b5b5b5] bg-[#4a4a4a] box-border" />
        </div>
        <div className="w-px h-[52px] mt-[2px] bg-[#111] shrink-0" />
        <div className="w-[1032px] shrink-0 flex flex-col pt-[10px]">
          <div className="flex items-center h-[17px]">
            <span className="ml-[5px] w-[591px] whitespace-nowrap text-[#d0d0d0]">1 Object Selected</span>
            <Isolate className="w-[16px] h-[16px]" />
            <Lock className="ml-[14px] w-[12px] h-[15px]" />
            <Abs className="ml-[13px] w-[14px] h-[14px]" />
            <span className="ml-[9px] w-[13px] font-medium">X:</span>
            <div className="w-[57px] h-[17px] bg-[#595959] text-[#858585] flex items-center pl-[3px]">-10,24</div>
            <span className="ml-[14px] w-[13px] font-medium">Y:</span>
            <div className="w-[57px] h-[17px] bg-[#595959] text-[#858585] flex items-center pl-[3px]">19,987</div>
            <span className="ml-[14px] w-[13px] font-medium">Z:</span>
            <div className="w-[57px] h-[17px] bg-[#595959] text-[#858585] flex items-center pl-[3px]">0,0</div>
            <span className="ml-[16px] whitespace-nowrap text-[#d0d0d0] text-[11.5px]">Grid = 10,0</span>
          </div>
          <div className="mt-[6px] ml-[901px] flex items-center h-[20px]">
            <div className="w-px h-[18px] bg-[#111]" />
            <div className="w-[21px] h-[20px] bg-[#5a86c0] rounded-[3px] flex items-center justify-center"><TagIco className="w-[15px] h-[15px]" /></div>
            <span className="ml-[5px] whitespace-nowrap text-[#d0d0d0]">Add Time Tag</span>
          </div>
        </div>
        <div className="ml-[9px] w-[113px] shrink-0 flex flex-col pt-[8px]">
          <div className="h-[20px] flex items-center">
            <GoStart className="w-[14px] h-[14px]" />
            <div className="ml-[6px] w-px h-[16px] bg-[#111]" />
            <Prev className="ml-[5px] w-[15px] h-[15px]" />
            <Play className="ml-[9px] w-[13px] h-[15px]" />
            <Next className="ml-[9px] w-[14px] h-[15px]" />
            <div className="ml-[7px] w-px h-[16px] bg-[#111]" />
            <GoEnd className="ml-[4px] w-[15px] h-[15px]" />
          </div>
          <div className="mt-[2px] h-[20px] flex items-center">
            <KeyMode className="ml-[1px] w-[12px] h-[12px]" />
            <div className="ml-[8px] w-px h-[16px] bg-[#111]" />
            <div className="ml-[1px] w-[68px] h-[16px] bg-[#5f5f5f] flex items-center justify-between pl-[3px] pr-[3px]">
              0
              <span className="flex flex-col gap-[2px]">
                <span className="w-0 h-0 border-x-[3px] border-x-transparent border-b-[3px] border-b-[#bbb]" />
                <span className="w-0 h-0 border-x-[3px] border-x-transparent border-t-[3px] border-t-[#bbb]" />
              </span>
            </div>
            <div className="ml-[2px] w-px h-[16px] bg-[#111]" />
            <TimeCfg className="ml-[5px] w-[14px] h-[14px]" />
          </div>
        </div>
        <Btn className="ml-[15px] mt-[8px] w-[42px] h-[42px]"><BigKey className="w-[34px] h-[34px]" /></Btn>
        <div className="ml-[5px] w-[46px] shrink-0 flex flex-col gap-[2px] pt-[8px] text-[11.5px]">
          <Btn className="w-[46px] h-[20px] text-[#c6c6c6]">Auto Key</Btn>
          <Btn className="w-[46px] h-[20px] text-[#c6c6c6]">Set Key</Btn>
        </div>
        <div className="ml-[5px] w-[114px] shrink-0 flex flex-col pt-[8px]">
          <Drop className="w-[114px]" label="Selected" />
          <div className="mt-[3px] flex items-center h-[20px]">
            <Tangent className="ml-[2px] w-[18px] h-[18px]" />
            <Btn className="ml-[6px] w-[88px] h-[20px] text-[12px]">Key Filters...</Btn>
          </div>
        </div>
        <div className="ml-[13px] pt-[9px] grid grid-cols-[15px_15px_15px_15px] gap-x-[8px] gap-y-[7px] h-fit">
          <Mag className="w-[15px] h-[15px]" />
          <ZoomAll className="w-[15px] h-[15px]" />
          <ZoomExt className="w-[15px] h-[15px]" />
          <ZoomExtAll className="w-[15px] h-[15px]" />
          <ZoomRegion className="w-[15px] h-[15px]" />
          <Hand size={15} color={G} fill={G} />
          <Orbit className="w-[15px] h-[15px]" />
          <MaxToggle className="w-[15px] h-[15px]" />
        </div>
      </div>

      {/* bottom edge left by the taskbar */}
      <div className="h-[2px] flex shrink-0">
        <div className="w-[48px] bg-black" />
        <div className="w-[344px] bg-[#333]" />
        <div className="w-[445px] bg-black" />
        <div className="w-[44px] bg-[#444]" />
        <div className="flex-1 bg-black" />
      </div>

      {/* taskbar peek */}
      <div className="absolute left-[8px] top-[873px] w-[144px] h-[25px] bg-white flex items-center">
        <div className="ml-[8px] w-[16px] h-[19px] bg-[#c9e7e8] text-[#0d7f8c] font-bold flex items-center justify-center">3</div>
        <svg viewBox="0 0 110 14" className="ml-[1px] w-[110px] h-[14px]" fill="none" stroke="#888" strokeWidth="1">
          <path d="M0.5 4.5 H7.5 V12.5 H0.5 Z M3 4.5 V1.5 H10.5 V9.5 H7.5" />
          <rect x="45.5" y="2.5" width="10" height="10" stroke="#ddd" />
          <path d="M91 2 L101 13 M101 2 L90 13" />
        </svg>
      </div>
    </div>
  );
}
